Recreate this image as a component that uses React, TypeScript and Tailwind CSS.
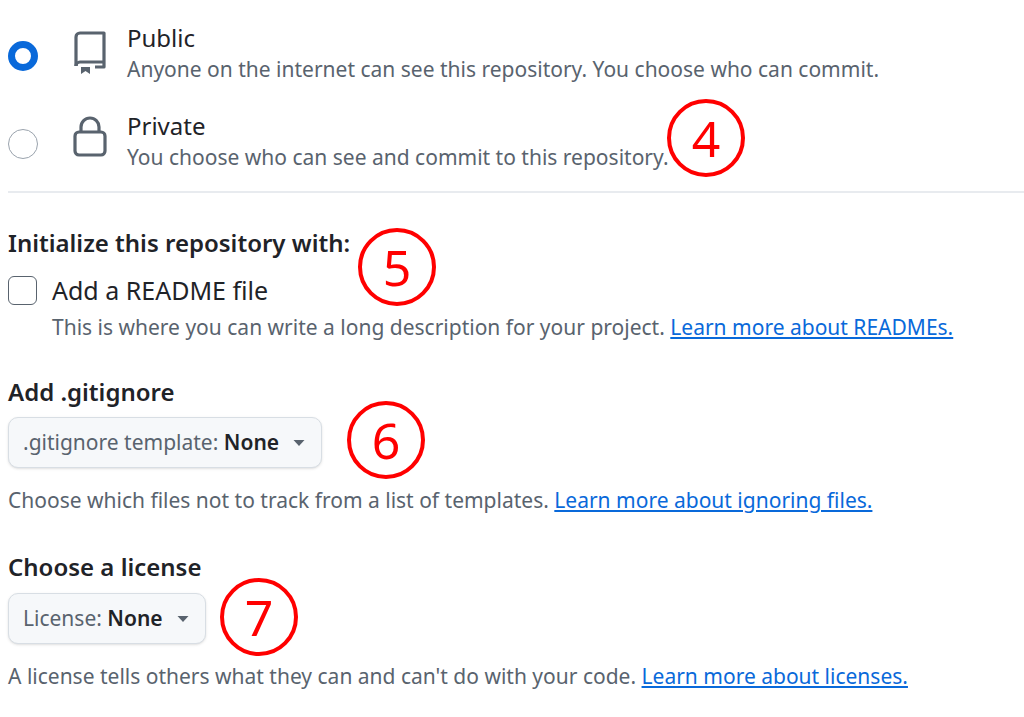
const Num = ({ n, x, y }: { n: string; x: number; y: number }) => (
  <div
    className="absolute w-[78px] h-[78px] rounded-full border-[4px] border-[#ff0000] flex items-center justify-center text-[#ff0000] text-[50px] leading-none"
    style={{ left: x - 39, top: y - 39 }}
  >
    {n}
  </div>
)

const Caret = () => (
  <svg width="16" height="16" viewBox="0 0 16 16" className="ml-3">
    <path d="M2.5 5h11L8 11z" fill="#59636e" />
  </svg>
)

export default function App() {
  return (
    <div className="relative w-[1024px] h-[717px] bg-white overflow-hidden text-[#1f2328] font-['Noto_Sans','Open_Sans',sans-serif]">
      <div className="flex items-start pt-[22px]">
        <div className="w-[30px] h-[30px] ml-[8px] mt-[19px] rounded-full border-[7px] border-[#0969da]" />
        <svg width="36" height="44" viewBox="0 0 36 44" className="ml-[34px] mt-[8px]" fill="none" stroke="#59636e" strokeWidth="3.2">
          <path d="M4 36V7a4 4 0 0 1 4-4h24v34h-9" strokeLinejoin="round" />
          <path d="M4 36a4 4 0 0 1 4-4h24" />
          <path d="M9 37h9v7l-4.5-3-4.5 3z" fill="#59636e" stroke="none" />
        </svg>
        <div className="ml-[19px]">
          <div className="text-[24px] leading-[32px]">Public</div>
          <div className="text-[21px] leading-[30px] text-[#59636e]">Anyone on the internet can see this repository. You choose who can commit.</div>
        </div>
      </div>
      <div className="flex items-start pt-[26px]">
        <div className="w-[30px] h-[30px] ml-[8px] mt-[19px] rounded-full border-[1.5px] border-[#9aa3ad]" />
        <svg width="36" height="44" viewBox="0 0 36 44" className="ml-[34px] mt-[4px]" fill="none" stroke="#59636e" strokeWidth="3.2">
          <path d="M9 18v-5a9 9 0 0 1 18 0v5" />
          <rect x="3" y="18" width="30" height="23" rx="4" />
        </svg>
        <div className="ml-[19px]">
          <div className="text-[24px] leading-[32px]">Private</div>
          <div className="text-[21px] leading-[30px] text-[#59636e]">You choose who can see and commit to this repository.</div>
        </div>
      </div>
      <div className="ml-[8px] mt-[19px] h-[2px] bg-[#e8ebef]" />

      <div className="pl-[8px] mt-[34px] text-[24px] leading-[32px] font-semibold">Initialize this repository with:</div>
      <div className="flex items-center pl-[8px] mt-[15px]">
        <div className="w-[29px] h-[29px] rounded-[6px] border-[1.5px] border-[#59636e]" />
        <span className="ml-[15px] text-[25px] leading-[32px]">Add a README file</span>
      </div>
      <div className="pl-[52px] mt-[6px] text-[21px] leading-[30px] text-[#59636e]">
        This is where you can write a long description for your project.{' '}
        <span className="text-[#0969da] underline">Learn more about READMEs.</span>
      </div>

      <div className="pl-[8px] mt-[34px] text-[24px] leading-[32px] font-semibold">Add .gitignore</div>
      <div className="pl-[8px] mt-[9px]">
        <div className="inline-flex items-center h-[51px] px-[14px] rounded-[10px] border-[1.5px] border-[#d8dee4] bg-[#f6f8fa] text-[21px] shadow-sm">
          <span className="text-[#59636e]">.gitignore template:&nbsp;</span>
          <span className="font-semibold">None</span>
          <Caret />
        </div>
      </div>
      <div className="pl-[8px] mt-[17px] text-[21px] leading-[30px] text-[#59636e]">
        Choose which files not to track from a list of templates.{' '}
        <span className="text-[#0969da] underline">Learn more about ignoring files.</span>
      </div>

      <div className="pl-[8px] mt-[36px] text-[24px] leading-[32px] font-semibold">Choose a license</div>
      <div className="pl-[8px] mt-[10px]">
        <div className="inline-flex items-center h-[51px] px-[14px] rounded-[10px] border-[1.5px] border-[#d8dee4] bg-[#f6f8fa] text-[21px] shadow-sm">
          <span className="text-[#59636e]">License:&nbsp;</span>
          <span className="font-semibold">None</span>
          <Caret />
        </div>
      </div>
      <div className="pl-[8px] mt-[17px] text-[21px] leading-[30px] text-[#59636e]">
        A license tells others what they can and can't do with your code.{' '}
        <span className="text-[#0969da] underline">Learn more about licenses.</span>
      </div>

      <Num n="4" x={706} y={138} />
      <Num n="5" x={397} y={267} />
      <Num n="6" x={386} y={440} />
      <Num n="7" x={259} y={617} />
    </div>
  )
}
